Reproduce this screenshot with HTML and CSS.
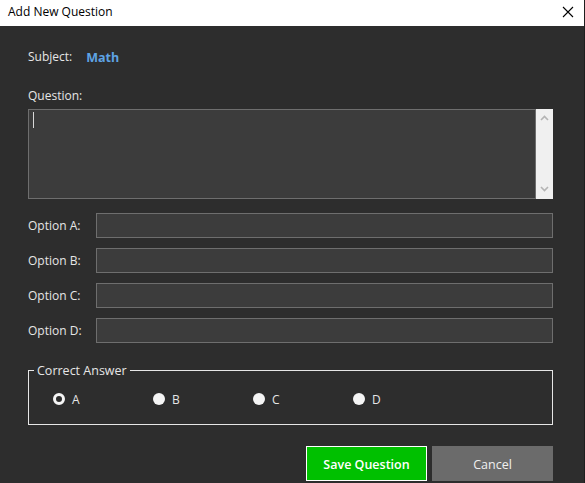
FILE: index.html
```html
<!DOCTYPE html>
<html>
<head>
<meta charset="utf-8">
<link rel="stylesheet" href="styles.css">
</head>
<body>
<div class="window">
  <div class="titlebar">
    <span class="title">Add New Question</span>
    <svg class="close" width="12" height="12" viewBox="0 0 12 12"><path d="M1 1L11 11M11 1L1 11" stroke="#000" stroke-width="1.1" fill="none"/></svg>
  </div>
  <div class="content">
    <div class="subject-row">
      <span class="label">Subject:</span>
      <span class="subject">Math</span>
    </div>
    <div class="question-label label">Question:</div>
    <div class="textarea">
      <div class="text-area-inner"><span class="caret"></span></div>
      <div class="scrollbar">
        <svg width="17" height="14" viewBox="0 0 17 14"><path d="M5 9L8.5 5.5L12 9" stroke="#b4b4b4" stroke-width="1.6" fill="none"/></svg>
        <svg width="17" height="14" viewBox="0 0 17 14"><path d="M5 5L8.5 8.5L12 5" stroke="#b4b4b4" stroke-width="1.6" fill="none"/></svg>
      </div>
    </div>
    <div class="options">
      <div class="option-row"><span class="label opt-label">Option A:</span><div class="input"></div></div>
      <div class="option-row"><span class="label opt-label">Option B:</span><div class="input"></div></div>
      <div class="option-row"><span class="label opt-label">Option C:</span><div class="input"></div></div>
      <div class="option-row"><span class="label opt-label">Option D:</span><div class="input"></div></div>
    </div>
    <div class="group">
      <span class="legend">Correct Answer</span>
      <div class="radios">
        <div class="radio-item"><span class="radio checked"></span><span class="radio-label">A</span></div>
        <div class="radio-item"><span class="radio"></span><span class="radio-label">B</span></div>
        <div class="radio-item"><span class="radio"></span><span class="radio-label">C</span></div>
        <div class="radio-item"><span class="radio"></span><span class="radio-label">D</span></div>
      </div>
    </div>
    <div class="buttons">
      <div class="btn save">Save Question</div>
      <div class="btn cancel">Cancel</div>
    </div>
  </div>
</div>
</body>
</html>
```
FILE: styles.css
```css
* { box-sizing: border-box; }
html, body {
  margin: 0;
  padding: 0;
  width: 585px;
  height: 483px;
  overflow: hidden;
  background: #2d2d2d;
  font-family: "Open Sans", "Noto Sans", sans-serif;
  font-size: 12px;
  color: #e6e6e6;
}
.window {
  width: 585px;
  height: 483px;
  display: flex;
  flex-direction: column;
  border-right: 1px solid #1e1e1e;
}
.titlebar {
  height: 26px;
  background: #ffffff;
  color: #000;
  display: flex;
  align-items: center;
  justify-content: space-between;
  padding: 0 10px 0 8px;
  font-size: 12px;
}
.title { line-height: 16px; margin-top: -3px; }
.close { margin-top: -3px; margin-right: 0px; }
.content {
  padding: 0 31px 0 28px;
  display: flex;
  flex-direction: column;
}
.label { line-height: 16px; color: #e6e6e6; }
.subject-row {
  margin-top: 23px;
  display: flex;
  height: 16px;
  align-items: center;
}
.subject {
  margin-left: 14px;
  color: #5ea3e4;
  font-weight: 700;
  font-size: 12.5px;
}
.question-label { margin-top: 23px; height: 16px; }
.textarea {
  margin-top: 5px;
  height: 90px;
  display: flex;
}
.text-area-inner {
  flex: 1;
  background: #3c3c3c;
  border: 1px solid #6e6e6e;
  padding: 2px 4px;
}
.caret {
  display: block;
  width: 1px;
  height: 16px;
  background: #d8d8d8;
}
.scrollbar {
  width: 17px;
  background: #f0f0f0;
  display: flex;
  flex-direction: column;
  justify-content: space-between;
  padding: 2px 0 3px;
}
.scrollbar svg { display: block; }
.options {
  margin-top: 14px;
  display: flex;
  flex-direction: column;
  gap: 10px;
}
.option-row {
  display: flex;
  align-items: center;
  height: 25px;
}
.opt-label { width: 68px; }
.input {
  flex: 1;
  height: 25px;
  background: #3c3c3c;
  border: 1px solid #6e6e6e;
}
.group {
  position: relative;
  margin-top: 27px;
  height: 55px;
  border: 1px solid #e6e6e6;
}
.legend {
  position: absolute;
  left: 5px;
  top: -9px;
  padding: 0 3px 0 3px;
  background: #2d2d2d;
  font-size: 12.5px;
  line-height: 18px;
  color: #e6e6e6;
}
.radios {
  display: flex;
  padding: 20px 0 0 24px;
}
.radio-item {
  width: 100px;
  display: flex;
  align-items: center;
  height: 16px;
}
.radio {
  width: 12px;
  height: 12px;
  border-radius: 50%;
  background: #f5f5f5;
  margin-right: 7px;
}
.radio.checked {
  background: #2d2d2d;
  border: 3px solid #f5f5f5;
}
.radio-label { line-height: 16px; margin-top: 2px; }
.buttons {
  margin-top: 21px;
  display: flex;
  justify-content: flex-end;
  gap: 5px;
}
.btn {
  width: 121px;
  height: 35px;
  display: flex;
  align-items: center;
  justify-content: center;
  font-size: 12.5px;
  padding-top: 2px;
}
.save {
  background: #00c000;
  border: 1px solid #ffffff;
  color: #ffffff;
  font-weight: 600;
}
.cancel {
  background: #6b6b6b;
  color: #f0f0f0;
}
```
